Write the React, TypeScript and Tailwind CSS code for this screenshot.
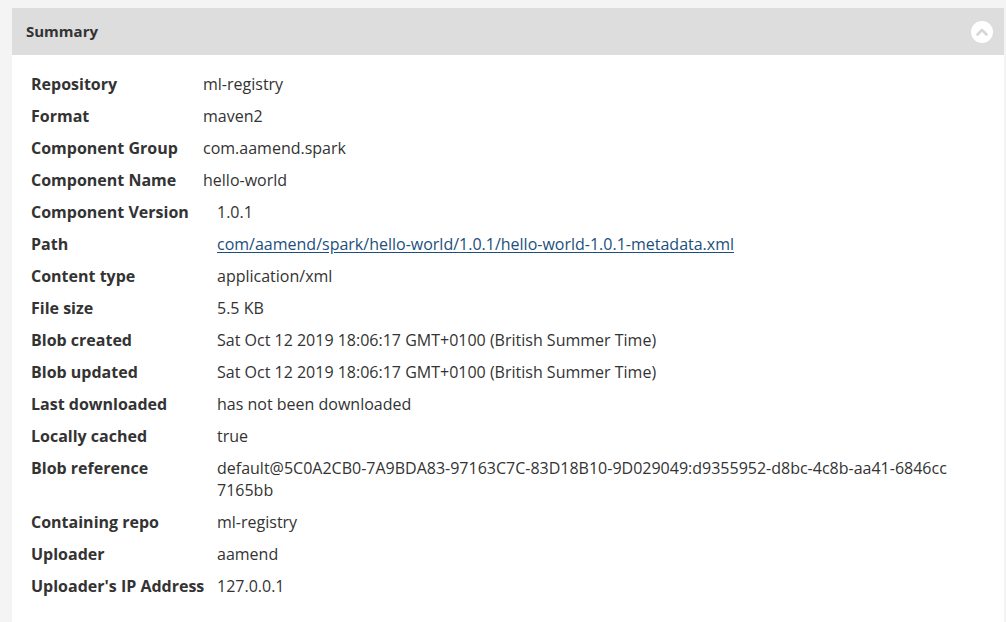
import React from "react";

type Row = { label: string; value: string; link?: boolean };

const table1: Row[] = [
  { label: "Repository", value: "ml-registry" },
  { label: "Format", value: "maven2" },
  { label: "Component Group", value: "com.aamend.spark" },
  { label: "Component Name", value: "hello-world" },
];

const table2: Row[] = [
  { label: "Component Version", value: "1.0.1" },
  { label: "Path", value: "com/aamend/spark/hello-world/1.0.1/hello-world-1.0.1-metadata.xml", link: true },
  { label: "Content type", value: "application/xml" },
  { label: "File size", value: "5.5 KB" },
  { label: "Blob created", value: "Sat Oct 12 2019 18:06:17 GMT+0100 (British Summer Time)" },
  { label: "Blob updated", value: "Sat Oct 12 2019 18:06:17 GMT+0100 (British Summer Time)" },
  { label: "Last downloaded", value: "has not been downloaded" },
  { label: "Locally cached", value: "true" },
  {
    label: "Blob reference",
    value:
      "default@5C0A2CB0-7A9BDA83-97163C7C-83D18B10-9D029049:d9355952-d8bc-4c8b-aa41-6846cc\n7165bb",
  },
  { label: "Containing repo", value: "ml-registry" },
  { label: "Uploader", value: "aamend" },
  { label: "Uploader's IP Address", value: "127.0.0.1" },
];

function Table({ rows, labelWidth }: { rows: Row[]; labelWidth: string }) {
  return (
    <div className="flex flex-col">
      {rows.map((r) => (
        <div key={r.label} className="flex py-[5px] text-[16px] leading-[22px]">
          <div className={`${labelWidth} shrink-0 font-bold text-[#333333]`}>{r.label}</div>
          <div className="min-w-0 flex-1 whitespace-pre-line break-all text-[#333333]">
            {r.link ? (
              <a href="#" className="text-[#1d4f7c] underline underline-offset-2">
                {r.value}
              </a>
            ) : (
              r.value
            )}
          </div>
        </div>
      ))}
    </div>
  );
}

export default function App() {
  return (
    <div
      className="min-h-[622px] bg-[#f4f4f4] pl-3 pr-[2px] pt-2"
      style={{ fontFamily: "'Open Sans', sans-serif" }}
    >
      <div className="min-h-[614px] bg-white text-[15px]">
        <div className="flex h-[47px] items-center justify-between bg-[#dddddd] pl-[14px] pr-[11px]">
          <span className="font-bold text-[#333333]">Summary</span>
          <span className="flex h-[22px] w-[22px] items-center justify-center rounded-full bg-white">
            <svg width="12" height="8" viewBox="0 0 12 8">
              <path d="M1.5 6.5 L6 2 L10.5 6.5" fill="none" stroke="#d6d6d6" strokeWidth="2.6" strokeLinecap="round" strokeLinejoin="round" />
            </svg>
          </span>
        </div>
        <div className="pl-[19px] pr-[14px] pt-[13px]">
          <Table rows={table1} labelWidth="w-[172px]" />
          <Table rows={table2} labelWidth="w-[186px]" />
        </div>
      </div>
    </div>
  );
}
